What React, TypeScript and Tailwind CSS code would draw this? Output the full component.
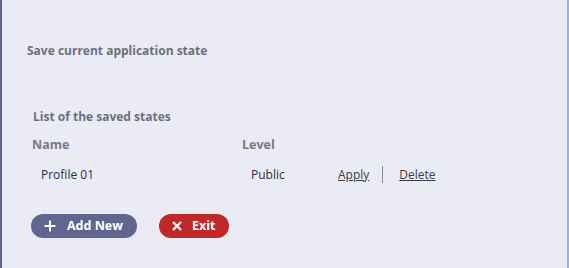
import React from "react";

export default function App() {
  return (
    <div className="w-[569px] h-[268px] bg-[#ebebf5] border-l-2 border-l-[#5f6690] border-r-2 border-r-[#a6ace2] font-['Open_Sans',sans-serif] overflow-hidden">
      <div className="pl-[25px] pt-[43px]">
        <div className="text-[12px] font-bold text-[#6c6f80] leading-[16px]">Save current application state</div>
        <div className="pl-[6px] mt-[50px]">
          <div className="text-[12px] font-bold text-[#6c6f80] leading-[16px]">List of the saved states</div>
          <div className="flex mt-[12px] -ml-px text-[12.5px] font-bold text-[#77798a] leading-[16px]">
            <div className="w-[210px]">Name</div>
            <div>Level</div>
          </div>
          <div className="flex mt-[13px] text-[12px] text-[#2e2e3a] leading-[16px] items-center">
            <div className="w-[210px] pl-[8px]">Profile 01</div>
            <div className="w-[95px] pl-[8px]">Public</div>
            <a className="underline text-[#3a3c4a]">Apply</a>
            <div className="w-px h-[17px] bg-[#8a8c98] ml-[13px] mr-[16px]"></div>
            <a className="underline text-[#3a3c4a]">Delete</a>
          </div>
          <div className="flex gap-[22px] mt-[31px] -ml-[2px]">
            <button className="h-[24px] w-[106px] rounded-full bg-[#5f6690] text-white text-[12.5px] font-bold flex items-center pl-[13px] gap-[11px]">
              <svg width="12" height="12" viewBox="0 0 12 12"><path d="M6 0.5V11.5M0.5 6H11.5" stroke="white" strokeWidth="2" /></svg>
              Add New
            </button>
            <button className="h-[24px] w-[70px] rounded-full bg-[#c0282a] text-white text-[12.5px] font-bold flex items-center pl-[13px] gap-[10px]">
              <svg width="10" height="10" viewBox="0 0 10 10"><path d="M1 1L9 9M9 1L1 9" stroke="white" strokeWidth="2.2" /></svg>
              Exit
            </button>
          </div>
        </div>
      </div>
    </div>
  );
}
